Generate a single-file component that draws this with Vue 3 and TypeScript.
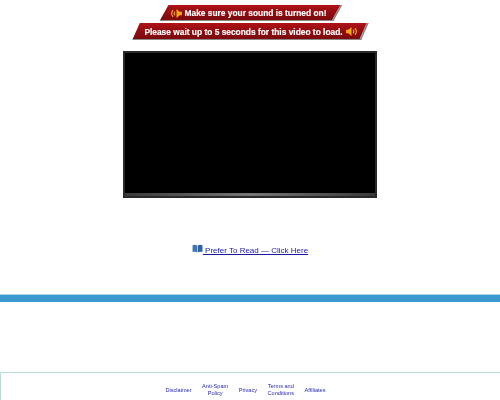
<script setup lang="ts">
const links: string[][] = [["Disclaimer"], ["Anti-Spam", "Policy"], ["Privacy"], ["Terms and", "Conditions"], ["Affiliates"]];
</script>

<template>
  <div class="page">
    <div class="banners">
      <div class="banner first">
        <svg class="spk" viewBox="0 0 12 10" width="11" height="9">
          <path d="M12 3H9.500L6 0v10l3.500-3H12z" fill="#f8a51c" />
          <path d="M4.300 2.800a3.400 3.400 0 0 0 0 4.400M2.200 1.300a5.600 5.600 0 0 0 0 7.400" fill="none" stroke="#f6a030" stroke-width="1.300" />
        </svg>
        <span>Make sure your sound is turned on!</span>
      </div>
      <div class="banner second">
        <span>Please wait up to 5 seconds for this video to load.</span>
        <svg class="spk" viewBox="0 0 12 10" width="11" height="9">
          <path d="M0 3h2.500L6 0v10L2.500 7H0z" fill="#f8a51c" />
          <path d="M7.700 2.800a3.400 3.400 0 0 1 0 4.400M9.800 1.300a5.600 5.600 0 0 1 0 7.400" fill="none" stroke="#f6a030" stroke-width="1.300" />
        </svg>
      </div>
    </div>

    <div class="video"><div class="screen"></div><div class="rail"></div></div>

    <a class="read" href="#">
      <svg viewBox="0 0 12 10" width="11" height="9">
        <path d="M.5 1.500C2 .5 4.500.5 5.700 1.800V9.500C4.500 8.300 2 8.300.5 9z" fill="#3f77b5" />
        <path d="M11.500 1.500C10 .5 7.500.5 6.300 1.800V9.500C7.500 8.300 10 8.300 11.500 9z" fill="#2f659f" />
      </svg>
      <span> Prefer To Read — Click Here</span>
    </a>

    <div class="bar"></div>

    <footer class="foot">
      <a v-for="l in links" :key="l[0]" class="flink" href="#">
        <span v-for="t in l" :key="t">{{ t }}</span>
      </a>
    </footer>
  </div>
</template>

<style scoped>
.page {
  width: 500px;
  height: 400px;
  overflow: hidden;
  background: #fff;
  font-family: "Liberation Sans", Arial, sans-serif;
  display: flex;
  flex-direction: column;
  align-items: center;
  filter: blur(0.3px);
}
.banners {
  flex: none;
  margin-top: 5px;
  padding-left: 1px;
  display: flex;
  flex-direction: column;
  align-items: center;
  gap: 2px;
}
.banner {
  position: relative;
  z-index: 0;
  flex: none;
  display: flex;
  align-items: center;
  justify-content: center;
  gap: 3px;
  color: #fff;
  font-weight: 700;
  font-size: 8.400px;
  -webkit-text-stroke: 0.15px #fff;
  white-space: nowrap;
}
.banner::before {
  content: "";
  position: absolute;
  z-index: -1;
  inset: 0;
  background: linear-gradient(#b01217, #8e0c10 55%, #7c0a0d);
  border-bottom: 1px solid #8a8a8a;
  border-right: 2px solid #8a8a8a;
  box-sizing: border-box;
}
.first {
  width: 174px;
  height: 16px;
  padding-right: 4px;
  box-sizing: border-box;
}
.first::before {
  transform: skewX(-29deg);
}
.second {
  width: 229px;
  height: 17px;
}
.second::before {
  transform: skewX(-24deg);
}
.video {
  flex: none;
  margin-top: 11px;
  width: 254px;
  height: 147px;
  box-sizing: border-box;
  border: 2px solid #2a2a2a;
  background: #000;
  display: flex;
  flex-direction: column;
}
.screen {
  flex: 1;
}
.rail {
  height: 3px;
  background: linear-gradient(90deg, #3a3a3a, #777 50%, #3a3a3a);
}
.read {
  flex: none;
  margin-top: 48px;
  color: #1a1aa6;
  font-size: 8px;
  line-height: 10px;
  white-space: pre;
  display: flex;
  align-items: flex-start;
}
.read svg {
  margin-top: -2px;
}
.bar {
  margin-top: 38px;
  width: 100%;
  height: 8px;
  flex: none;
  background: #3b99cd;
  border-top: 1px solid #a9d5e8;
  box-sizing: border-box;
}
.foot {
  margin-top: 70px;
  width: 100%;
  box-sizing: border-box;
  height: 28px;
  flex: none;
  border-top: 1px solid #bcdcd8;
  border-left: 1px solid #bcdcd8;
  padding: 10px 10px 0 0;
  display: flex;
  justify-content: center;
  align-items: flex-start;
  gap: 10.500px;
}
.flink {
  display: flex;
  flex-direction: column;
  align-items: center;
  justify-content: center;
  height: 14px;
  color: #2a2ab0;
  font-size: 5.600px;
  line-height: 7px;
  text-decoration: none;
}
</style>
